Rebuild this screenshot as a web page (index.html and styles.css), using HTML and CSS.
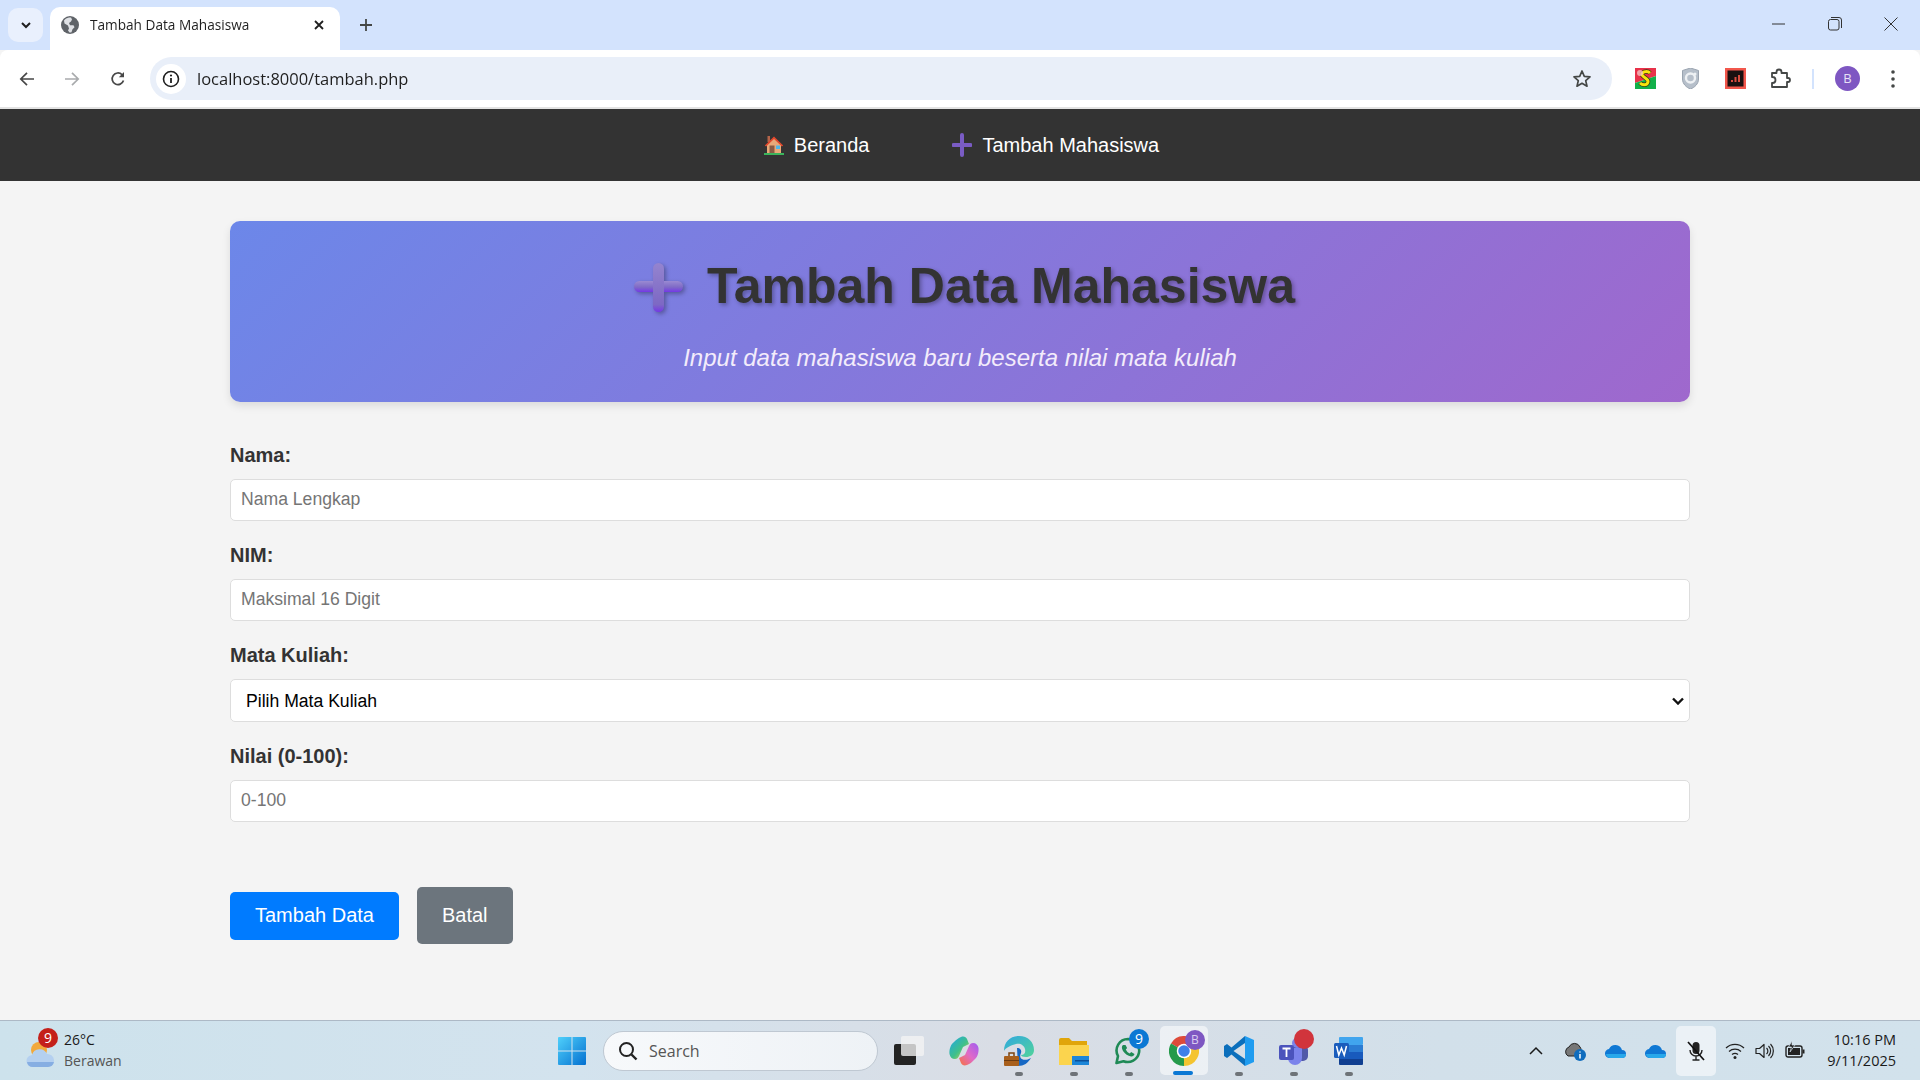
FILE: index.html
```html
<!DOCTYPE html>
<html lang="id">
<head>
<meta charset="utf-8">
<title>Tambah Data Mahasiswa</title>
<link rel="stylesheet" href="styles.css">
</head>
<body>
<div class="screen">

  <header class="tabstrip">
    <button class="tab-search"><svg class="ic12" viewBox="0 0 12 12"><path d="M2 4l4 4 4-4" fill="none" stroke="#1f1f1f" stroke-width="2"/></svg></button>
    <div class="tab">
      <svg class="favicon" viewBox="0 0 18 18"><circle cx="9" cy="9" r="9" fill="#5f6368"/><path d="M8 1.500c-2 .4-4 1.500-5 3l.5 3 3.500 2 1 3-1 2 1.500 2c1 0 1.500-.1 2-.3l1-3 2-2-1-2H9L8 7l2-1.500 1-2-1-2z" fill="#dfe1e5"/></svg>
      <span class="tab-title">Tambah Data Mahasiswa</span>
      <svg class="tab-close" viewBox="0 0 12 12"><path d="M2 2l8 8M10 2l-8 8" stroke="#1f1f1f" stroke-width="1.800"/></svg>
    </div>
    <svg class="new-tab" viewBox="0 0 14 14"><path d="M7 1v12M1 7h12" stroke="#444746" stroke-width="1.800"/></svg>
    <div class="winctl">
      <svg class="winbtn" viewBox="0 0 14 14"><path d="M0 7h13" stroke="#333" stroke-width="1"/></svg>
      <svg class="winbtn" viewBox="0 0 14 14"><rect x=".5" y="2.500" width="10.500" height="10.500" rx="2" fill="none" stroke="#333"/><path d="M3 .5h8a2.500 2.500 0 0 1 2.500 2.500v8" fill="none" stroke="#333"/></svg>
      <svg class="winbtn" viewBox="0 0 14 14"><path d="M.5.5l13 13M13.500.5l-13 13" stroke="#333" stroke-width="1"/></svg>
    </div>
  </header>

  <div class="toolbar">
    <svg class="navbtn" viewBox="0 0 16 16"><path d="M15 8H2M8 1.800L1.800 8 8 14.200" fill="none" stroke="#474747" stroke-width="1.700"/></svg>
    <svg class="navbtn" viewBox="0 0 16 16"><path d="M1 8h13M8 1.800L14.200 8 8 14.200" fill="none" stroke="#a9abad" stroke-width="1.700"/></svg>
    <svg class="navbtn" viewBox="0 0 16 16"><path d="M13.500 9.500A5.800 5.800 0 1 1 12 3.600" fill="none" stroke="#474747" stroke-width="1.700"/><path d="M14 1v5.200H8.800z" fill="#474747"/></svg>
    <div class="omnibox">
      <span class="site-info"><svg class="ic18" viewBox="0 0 18 18"><circle cx="9" cy="9" r="7.500" fill="none" stroke="#1f1f1f" stroke-width="1.600"/><path d="M9 8v5" stroke="#1f1f1f" stroke-width="1.800"/><circle cx="9" cy="5.500" r="1.100" fill="#1f1f1f"/></svg></span>
      <span class="url">localhost:8000/tambah.php</span>
      <svg class="star" viewBox="0 0 20 20"><path d="M10 2l2.300 5.300 5.700.5-4.300 3.800 1.300 5.600L10 14.300 5 17.200l1.300-5.600L2 7.800l5.700-.5z" fill="none" stroke="#444746" stroke-width="1.700" stroke-linejoin="round"/></svg>
    </div>
    <div class="extensions">
      <svg class="ext" viewBox="0 0 21 21"><path d="M0 0h21v8L0 15z" fill="#e8324a"/><path d="M0 21V15L21 8v13z" fill="#12b04a"/><path d="M15 5c-2-2-7-2-8 1s7 4 6 8-6 3-8 1" fill="none" stroke="#3a3a10" stroke-width="4.500"/><path d="M15 5c-2-2-7-2-8 1s7 4 6 8-6 3-8 1" fill="none" stroke="#f7e40c" stroke-width="3"/><circle cx="5" cy="5" r="3" fill="#f3c0c0" fill-opacity=".8"/></svg>
      <svg class="ext" viewBox="0 0 21 21"><path d="M10.500 0l8 2.500V11c0 5-4 8.500-8 10-4-1.500-8-5-8-10V2.500z" fill="#b6bfca" stroke="#9aa4b0"/><circle cx="10.500" cy="10" r="4.500" fill="none" stroke="#eef1f4" stroke-width="2.400"/><circle cx="15" cy="6" r="1.500" fill="#eef1f4"/></svg>
      <svg class="ext" viewBox="0 0 21 21"><rect width="21" height="21" fill="#f2574c"/><rect x="2.500" y="2.500" width="16" height="16" fill="#1a1010"/><path d="M6 14h2v-2H6zM9.500 14h2V9h-2zM13 14h2V7h-2z" fill="#d84a3e"/></svg>
      <svg class="ext" viewBox="0 0 21 21"><path d="M2 5h4.500V4a2.500 2.500 0 0 1 5 0v1H17v5h1a2 2 0 0 1 0 4h-1v5H2v-4h.5a2.500 2.500 0 0 0 0-6H2z" fill="none" stroke="#444746" stroke-width="1.800" stroke-linejoin="round"/></svg>
      <span class="ext-sep"></span>
      <span class="avatar">B</span>
      <svg class="menu" viewBox="0 0 6 20"><circle cx="3" cy="3" r="1.800" fill="#444746"/><circle cx="3" cy="10" r="1.800" fill="#444746"/><circle cx="3" cy="17" r="1.800" fill="#444746"/></svg>
    </div>
  </div>

  <nav class="sitenav">
    <a class="sitelink" href="#"><svg class="nav-emoji" viewBox="0 0 20 20"><path d="M3.500 1h2.500v6H3.500z" fill="#b5654a"/><path d="M3 9.500L10 3l7 6.500V18H3z" fill="#e8a979"/><path d="M.8 10.500L10 1.500l9.200 9-1.300 1L10 4 2.100 11.500z" fill="#e2482d"/><path d="M5.500 10.500h5V18h-5z" fill="#8a5a44"/><path d="M12 10.500h4V14h-4z" fill="#4fb6e8"/><path d="M0 18h20v2H0z" fill="#3bb55c"/></svg>Beranda</a>
    <a class="sitelink" href="#"><svg class="nav-plus" viewBox="0 0 20 24"><path d="M10 2v20M1.500 12h17" stroke="#7a5cc4" stroke-width="4" stroke-linecap="round"/></svg>Tambah Mahasiswa</a>
  </nav>

  <main class="content">
    <section class="hero">
      <h1 class="hero-title">
        <svg class="hero-plus" viewBox="0 0 68 50">
          <defs>
            <linearGradient id="plusH" x1="0" y1="0" x2="0" y2="1"><stop offset="0" stop-color="#9a8ad2"/><stop offset=".55" stop-color="#7f6bc6"/><stop offset="1" stop-color="#7438e6"/></linearGradient>
            <linearGradient id="plusV" x1="0" y1="0" x2="0" y2="1"><stop offset="0" stop-color="#9484cf"/><stop offset=".85" stop-color="#7d68c4"/><stop offset="1" stop-color="#7438e6"/></linearGradient>
          </defs>
          <rect x="8" y="19" width="49" height="11" rx="5.500" fill="url(#plusH)"/>
          <rect x="27" y="1" width="11" height="49" rx="5.500" fill="url(#plusV)"/>
        </svg>
        <span>Tambah Data Mahasiswa</span>
      </h1>
      <p class="hero-sub">Input data mahasiswa baru beserta nilai mata kuliah</p>
    </section>

    <form class="form">
      <div class="field">
        <label class="label" for="nama">Nama:</label>
        <input class="control" id="nama" type="text" placeholder="Nama Lengkap">
      </div>
      <div class="field">
        <label class="label" for="nim">NIM:</label>
        <input class="control" id="nim" type="text" placeholder="Maksimal 16 Digit">
      </div>
      <div class="field">
        <label class="label" for="mk">Mata Kuliah:</label>
        <select class="control select" id="mk"><option>Pilih Mata Kuliah</option></select>
      </div>
      <div class="field">
        <label class="label" for="nilai">Nilai (0-100):</label>
        <input class="control" id="nilai" type="text" placeholder="0-100">
      </div>
      <div class="actions">
        <button class="btn btn-primary" type="button">Tambah Data</button>
        <a class="btn btn-cancel" href="#">Batal</a>
      </div>
    </form>
  </main>

  <footer class="taskbar">
    <div class="weather">
      <span class="weather-icon">
        <svg class="ic30" viewBox="0 0 30 28"><circle cx="15" cy="10" r="8" fill="#f2a93b"/><path d="M9 27a6 6 0 0 1-1-12 8 8 0 0 1 15-1 6.500 6.500 0 0 1 1 13z" fill="#b4d0f0"/><path d="M9 27a6 6 0 0 1-6-5h27a6.500 6.500 0 0 1-6 5z" fill="#86aee2"/></svg>
        <span class="badge badge-red">9</span>
      </span>
      <div class="weather-text"><span class="temp">26°C</span><span class="cond">Berawan</span></div>
    </div>

    <div class="task-center">
      <span class="cell cell-win"><svg class="ic30" viewBox="0 0 30 30"><defs><linearGradient id="win" x1="0" y1="0" x2="1" y2="1"><stop offset="0" stop-color="#4fd0fb"/><stop offset="1" stop-color="#0470d0"/></linearGradient></defs><path d="M1 2a1 1 0 0 1 1-1h12.500v13.500H1zM15.500 1H28a1 1 0 0 1 1 1v12.500H15.500zM1 15.500h13.500V29H2a1 1 0 0 1-1-1zM15.500 15.500H29V28a1 1 0 0 1-1 1H15.500z" fill="url(#win)"/></svg></span>
      <div class="search">
        <svg class="ic20" viewBox="0 0 20 20"><circle cx="8.500" cy="8.500" r="6.500" fill="none" stroke="#222" stroke-width="2"/><path d="M13.500 13.500l5 5" stroke="#222" stroke-width="2.400"/></svg>
        <span class="search-text">Search</span>
      </div>
      <span class="cell cell-first"><svg class="ic30" viewBox="0 0 30 30"><rect x="0" y="8" width="22" height="21" rx="2" fill="#232323"/><rect x="7" y="0" width="23" height="20" rx="2" fill="#f4f4f4" fill-opacity=".78"/></svg></span>
      <span class="cell"><svg class="ic30" viewBox="0 0 30 30"><defs><linearGradient id="cp1" x1="0" y1="0" x2="1" y2="1"><stop offset="0" stop-color="#1fa6e8"/><stop offset=".55" stop-color="#3fc08a"/><stop offset="1" stop-color="#f5d63a"/></linearGradient><linearGradient id="cp2" x1="1" y1="0" x2="0" y2="1"><stop offset="0" stop-color="#a05cf0"/><stop offset=".5" stop-color="#e06ac8"/><stop offset="1" stop-color="#f7733a"/></linearGradient></defs><path d="M12 1c3-1 5 0 6 2l2 5-6 3-4 9c-1 2-2 3-4 3-3 0-5-2-5.500-5C0 13 2 8 5 6c2-2 4-4 7-5z" fill="url(#cp1)"/><path d="M18 29c-3 1-5 0-6-2l-2-5 6-3 4-9c1-2 2-3 4-3 3 0 5 2 5.500 5 .5 5-1.500 10-4.500 12-2 2-4 4-7 5z" fill="url(#cp2)"/></svg></span>
      <span class="cell"><svg class="ic30" viewBox="0 0 30 30"><defs><linearGradient id="edg" x1="0" y1="0" x2="1" y2="1"><stop offset="0" stop-color="#2fa8e0"/><stop offset="1" stop-color="#52d39a"/></linearGradient></defs><path d="M15 0c9 0 15 6 15 14 0 5-4 7-8 7-3 0-5-1-5-2 3 0 5-2 4-6-1-4-5-6-9-5S1 12 0 15C0 6 6 0 15 0z" fill="url(#edg)"/><path d="M13 12c3 0 5 2 4 5-3 6 3 9 10 5-3 5-7 8-13 8z" fill="#1668c4"/><rect x="0" y="20" width="15" height="10" rx="1" fill="#a85f1c"/><path d="M5 20v-3h5v3" fill="none" stroke="#7c4412" stroke-width="1.500"/><rect x="0" y="24" width="15" height="1" fill="#6e3b0f"/></svg><span class="run-dot"></span></span>
      <span class="cell"><svg class="ic30" viewBox="0 0 30 30"><path d="M0 4a2 2 0 0 1 2-2h8l3 3h15v24H0z" fill="#e0a50a"/><path d="M0 9h30v20H0z" fill="#fbd44e"/><path d="M13 20h17v9H13z" fill="#1c86d8"/><path d="M16 24h14v1.500H16z" fill="#0b4f98"/></svg><span class="run-dot"></span></span>
      <span class="cell"><svg class="ic30" viewBox="0 0 30 30"><path d="M14 3a11.500 11.500 0 0 0-10 17L2.500 27l7-1.800A11.500 11.500 0 1 0 14 3z" fill="none" stroke="#1f8a56" stroke-width="2.600" stroke-linejoin="round"/><path d="M9 9c-1.500 1-1.500 3 0 6 2 3 5 5 8 5.500 2 .2 3-1 3.500-2.500l-3.300-2-1.400 1.500c-2-1-3-2-4-4l1.300-1.400L11.500 9z" fill="#1f8a56"/></svg><span class="badge badge-blue">9</span><span class="run-dot"></span></span>
      <span class="cell cell-active"><svg class="ic30" viewBox="0 0 24 24"><path d="M12 12L1.600 6A12 12 0 0 1 22.400 6z" fill="#dd4b3a"/><path d="M12 12L22.400 6A12 12 0 0 1 12 24z" fill="#f4c430"/><path d="M12 12L12 24A12 12 0 0 1 1.600 6z" fill="#259a4b"/><circle cx="12" cy="12" r="5.800" fill="#fff"/><circle cx="12" cy="12" r="4.600" fill="#3f7fe8"/></svg><span class="badge badge-purple">B</span><span class="run-bar"></span></span>
      <span class="cell"><svg class="ic30" viewBox="0 0 30 30"><path d="M21 0l9 4v22l-9 4z" fill="#1f9cf0"/><path d="M21 0v7L9.500 15 21 23v7L7.500 18.500 3 22l-3-2v-10l3-2 4.500 3.500z" fill="#0b6fbc"/></svg><span class="run-dot"></span></span>
      <span class="cell"><svg class="ic30" viewBox="0 0 30 30"><rect x="14" y="9" width="15" height="16" rx="5" fill="#5059a8"/><circle cx="18" cy="7" r="5" fill="#7b83eb"/><path d="M9 12h14v10a7 7 0 0 1-14 0z" fill="#7b83eb"/><rect x="0" y="9" width="15" height="15" rx="2" fill="#4b53bc"/><path d="M3.500 12.500h8M7.500 12.500V21" stroke="#fff" stroke-width="1.800"/></svg><span class="badge badge-dot"></span><span class="run-dot"></span></span>
      <span class="cell"><svg class="ic30" viewBox="0 0 30 30"><rect x="5" y="1" width="24" height="8" rx="1" fill="#41a5ee"/><rect x="5" y="9" width="24" height="7" fill="#2b7cd3"/><rect x="5" y="16" width="24" height="7" fill="#185abd"/><path d="M5 23h24v5a1 1 0 0 1-1 1H6a1 1 0 0 1-1-1z" fill="#103f91"/><rect x="0" y="7" width="15" height="15" rx="1.500" fill="#1a5cbc"/><path d="M2.500 10l2.300 9 2.700-7 2.700 7 2.300-9" fill="none" stroke="#fff" stroke-width="1.500"/></svg><span class="run-dot"></span></span>
    </div>

    <div class="tray">
      <span class="tray-cell"><svg class="ic14" viewBox="0 0 14 14"><path d="M1 10l6-6 6 6" fill="none" stroke="#1a1a1a" stroke-width="1.500"/></svg></span>
      <span class="tray-cell"><svg class="ic22" viewBox="0 0 22 22"><path d="M3 16a5 5 0 0 1 1-9 6 6 0 0 1 11 0 4 4 0 0 1 1 3l-5 6z" fill="#777" stroke="#222"/><circle cx="15" cy="15" r="6" fill="#0f6cbd"/><path d="M15 14v4.500M15 11.500v1" stroke="#fff" stroke-width="1.500"/></svg></span>
      <span class="tray-cell"><svg class="ic22" viewBox="0 0 22 22"><path d="M5 18a4.500 4.500 0 0 1-1-9 7 7 0 0 1 13 1 4 4 0 0 1 0 8z" fill="#0f78d4"/><path d="M5 18a4.500 4.500 0 0 1-4-4h20a4 4 0 0 1-4 4z" fill="#28a8ea"/></svg></span>
      <span class="tray-cell"><svg class="ic22" viewBox="0 0 22 22"><path d="M5 18a4.500 4.500 0 0 1-1-9 7 7 0 0 1 13 1 4 4 0 0 1 0 8z" fill="#0f78d4"/><path d="M5 18a4.500 4.500 0 0 1-4-4h20a4 4 0 0 1-4 4z" fill="#28a8ea"/></svg></span>
      <span class="tray-cell tray-hover"><svg class="ic22" viewBox="0 0 22 22"><rect x="7.500" y="2" width="7" height="12" rx="3.500" fill="#222"/><path d="M5 10a6 6 0 0 0 12 0M11 16v4M7.500 20h7" fill="none" stroke="#222" stroke-width="1.400"/><path d="M3 2l16 18" stroke="#111" stroke-width="1.700"/></svg></span>
      <span class="tray-sm"><svg class="ic20" viewBox="0 0 20 20"><path d="M1 7a13 13 0 0 1 18 0M4 10.500a9 9 0 0 1 12 0M7 13.500a5 5 0 0 1 6 0" fill="none" stroke="#222" stroke-width="1.300"/><circle cx="10" cy="16.500" r="1.500" fill="#222"/></svg></span>
      <span class="tray-sm"><svg class="ic20" viewBox="0 0 20 20"><path d="M1 7.500h3.500L9 3.500v13l-4.500-4H1z" fill="none" stroke="#222" stroke-width="1.200" stroke-linejoin="round"/><path d="M11.500 7a4 4 0 0 1 0 6M13.500 5a7 7 0 0 1 0 10M15.500 3a10 10 0 0 1 0 14" fill="none" stroke="#222" stroke-width="1.200"/></svg></span>
      <span class="tray-sm"><svg class="ic20" viewBox="0 0 20 20"><rect x="1" y="5" width="16" height="11" rx="2" fill="none" stroke="#222" stroke-width="1.400"/><rect x="3" y="7" width="12" height="7" fill="#222"/><rect x="17.500" y="8.500" width="2" height="4" fill="#222"/><path d="M7 0L3.500 6h3L5 11l5-7H7z" fill="#222" stroke="#d3e0ea" stroke-width=".7"/></svg></span>
      <div class="clock"><span>10:16 PM</span><span>9/11/2025</span></div>
    </div>
  </footer>
</div>
</body>
</html>
```
FILE: styles.css
```css
* { box-sizing: border-box; }
html, body { margin: 0; padding: 0; }
body { font-family: "Liberation Sans", Arial, sans-serif; background: #f4f4f4; color: #333; overflow: hidden; }
.screen { width: 1920px; height: 1080px; display: flex; flex-direction: column; overflow: hidden; }

/* icon sizes */
.ic12 { width: 12px; height: 12px; }
.ic14 { width: 14px; height: 14px; }
.ic18 { width: 18px; height: 18px; }
.ic20 { width: 20px; height: 20px; flex: none; }
.ic22 { width: 22px; height: 22px; }
.ic30 { width: 30px; height: 30px; flex: none; }

/* browser tab strip */
.tabstrip { height: 50px; flex: none; background: #d3e3fd; display: flex; align-items: flex-end; padding-left: 8px; position: relative; }
.tab-search { width: 35px; height: 34px; margin-bottom: 8px; border: 0; border-radius: 10px; background: #e9f0fd; display: flex; align-items: center; justify-content: center; padding: 0; }
.tab { width: 290px; height: 43px; margin-left: 7px; background: #fff; border-radius: 10px 10px 0 0; display: flex; align-items: center; padding: 0 14px 7px 11px; position: relative; }
.favicon { width: 18px; height: 18px; flex: none; }
.tab-title { margin-left: 11px; font: 400 14.500px/18px "Open Sans", sans-serif; color: #1f1f1f; flex: 1; white-space: nowrap; transform-origin: left center; transform: scaleX(.94); }
.tab-close { width: 12px; height: 12px; flex: none; margin-right: 1px; }
.new-tab { width: 14px; height: 14px; margin: 0 0 18px 19px; }
.winctl { margin-left: auto; height: 50px; display: flex; align-self: flex-start; align-items: center; gap: 42px; padding: 0 22px 3px 0; }
.winbtn { width: 14px; height: 14px; }

/* browser toolbar */
.toolbar { height: 59px; flex: none; background: #fff; border-bottom: 2px solid #e3e3e3; border-radius: 8px 8px 0 0; display: flex; align-items: center; padding: 0 0 0 19px; }
.navbtn { width: 16px; height: 16px; margin-right: 29px; flex: none; }
.navbtn:nth-of-type(3) { margin-right: 24px; margin-left: 1px; }
.omnibox { width: 1462px; height: 43px; border-radius: 22px; background: #e9eff9; display: flex; align-items: center; padding: 0 20px 0 6px; }
.site-info { width: 30px; height: 30px; border-radius: 50%; background: #fff; display: flex; align-items: center; justify-content: center; flex: none; }
.url { margin-left: 11px; font: 400 17px/22px "Open Sans", sans-serif; color: #1f1f1f; white-space: nowrap; transform-origin: left center; transform: scaleX(.97); }
.star { width: 20px; height: 20px; margin-left: auto; }
.extensions { display: flex; align-items: center; flex: 1; padding-left: 23px; }
.ext { width: 21px; height: 21px; margin-right: 24px; flex: none; }
.ext-sep { width: 2px; height: 20px; background: #d3e3fd; margin: 0 21px 0 -3px; }
.avatar { width: 25px; height: 25px; border-radius: 50%; background: #7e57c2; color: #e8e0f6; font: 400 13px/25px "Open Sans", sans-serif; text-align: center; flex: none; }
.menu { width: 6px; height: 20px; margin-left: 30px; }

/* site navigation */
.sitenav { height: 72px; flex: none; background: #333; display: flex; justify-content: center; align-items: center; gap: 83px; padding-left: 3px; }
.sitelink { display: flex; align-items: center; color: #fff; font-size: 20px; line-height: 23px; text-decoration: none; }
.nav-emoji { width: 20px; height: 20px; margin-right: 10px; }
.nav-plus { width: 20px; height: 24px; margin-right: 10px; }

/* page content */
.content { flex: 1; width: 1460px; margin: 0 auto; padding-top: 40px; }
.hero { height: 181px; padding-top: 37px; border-radius: 10px; background: linear-gradient(135deg, #6c87e9, #9f68cd); box-shadow: 0 4px 8px rgba(0, 0, 0, .1); text-align: center; }
.hero-title { margin: 0; display: flex; justify-content: center; align-items: center; height: 57px; font-size: 50px; line-height: 57px; font-weight: 700; color: #333; text-shadow: 2px 2px 4px rgba(0, 0, 0, .3); }
.hero-plus { width: 68px; height: 50px; margin: 0 13px 0 1px; filter: drop-shadow(2px 2px 2px rgba(0, 0, 0, .3)); }
.hero-sub { margin: 29px 0 0; font-size: 24px; line-height: 27px; font-style: italic; color: #f3ecfb; }

.form { padding-top: 42px; }
.field { margin-bottom: 23px; }
.label { display: block; font-size: 20px; line-height: 23px; font-weight: 700; color: #333; margin-bottom: 12px; }
.control { display: block; width: 100%; height: 42px; padding: 9px 10px 11px; border: 1.500px solid #ddd; border-radius: 5px; background: #fff; font: 17.600px/20px "Liberation Sans", Arial, sans-serif; color: #000; }
.control::placeholder { color: #757575; }
.select { height: 43px; padding: 10px 30px 10px 15px; appearance: none; background: #fff url("data:image/svg+xml,%3Csvg xmlns='http://www.w3.org/2000/svg' width='12' height='8' viewBox='0 0 12 8'%3E%3Cpath d='M1 1.500l5 5 5-5' fill='none' stroke='%23111' stroke-width='2.400'/%3E%3C/svg%3E") no-repeat right 5px center; }

.actions { display: flex; align-items: center; gap: 18px; margin-top: 65px; }
.btn { display: block; border: 0; padding: 0 25px; border-radius: 5px; color: #fff; font: 20px/23px "Liberation Sans", Arial, sans-serif; text-decoration: none; }
.btn-primary { background: #007bff; padding-top: 12.500px; padding-bottom: 12.500px; }
.btn-cancel { background: #6c757d; padding-top: 17px; padding-bottom: 17px; }

/* Windows taskbar */
.taskbar { height: 60px; flex: none; display: flex; align-items: stretch; border-top: 1px solid #adb9c6; background: linear-gradient(90deg, #cde2ec 0%, #d3e3ee 30%, #d9dde5 52%, #d2e0ea 75%, #d2e2ec 100%); }
.weather { width: 544px; flex: none; display: flex; align-items: center; padding-left: 24px; }
.weather-icon { position: relative; width: 30px; height: 28px; margin-right: 10px; margin-top: 4px; }
.weather-text { display: flex; flex-direction: column; font: 400 14px/21px "Open Sans", sans-serif; margin-top: -2px; }
.temp { color: #1a1a1a; }
.cond { color: #555; }

.task-center { display: flex; align-items: center; }
.cell { position: relative; width: 55px; height: 59px; flex: none; display: flex; align-items: center; justify-content: center; }
.cell-win { margin-right: 4px; }
.cell-first { margin-left: 3px; }
.cell-active::before { content: ""; position: absolute; left: 4px; right: 3px; top: 5px; bottom: 5px; border-radius: 5px; background: rgba(255, 255, 255, .55); }
.cell-active svg { position: relative; }
.search { width: 275px; height: 40px; border-radius: 20px; background: linear-gradient(90deg, #f7f9fb, #eef2f6); border: 1px solid #bfc8d2; display: flex; align-items: center; padding-left: 14px; }
.search-text { margin-left: 11px; font: 400 16px/20px "Open Sans", sans-serif; color: #555; }
.run-dot { position: absolute; left: 24px; bottom: 4px; width: 8px; height: 4px; border-radius: 2px; background: #6e7378; }
.run-bar { position: absolute; left: 17px; bottom: 5px; width: 20px; height: 4px; border-radius: 2px; background: #0b78d4; }

.badge { position: absolute; width: 20px; height: 20px; border-radius: 50%; color: #fff; font: 400 14px/20px "Open Sans", sans-serif; text-align: center; }
.badge-red { left: 14px; top: -11px; background: #c4201a; }
.badge-blue { left: 28px; top: 8px; background: #0b78d4; }
.badge-purple { left: 29px; top: 9px; background: #7e57c2; color: #d9ccf0; font-size: 12px; }
.badge-dot { left: 28px; top: 8px; background: #d1343c; }

.tray { margin-left: auto; display: flex; align-items: center; padding-right: 24px; }
.tray-cell { width: 40px; height: 50px; display: flex; align-items: center; justify-content: center; position: relative; left: 1px; }
.tray-hover { background: rgba(255, 255, 255, .55); border-radius: 5px; margin-right: 5px; }
.tray-sm { width: 30px; height: 50px; display: flex; align-items: center; justify-content: center; }
.clock { width: 86px; display: flex; flex-direction: column; align-items: flex-end; font: 400 14.500px/21px "Open Sans", sans-serif; color: #1a1a1a; margin-top: -2px; }
```
